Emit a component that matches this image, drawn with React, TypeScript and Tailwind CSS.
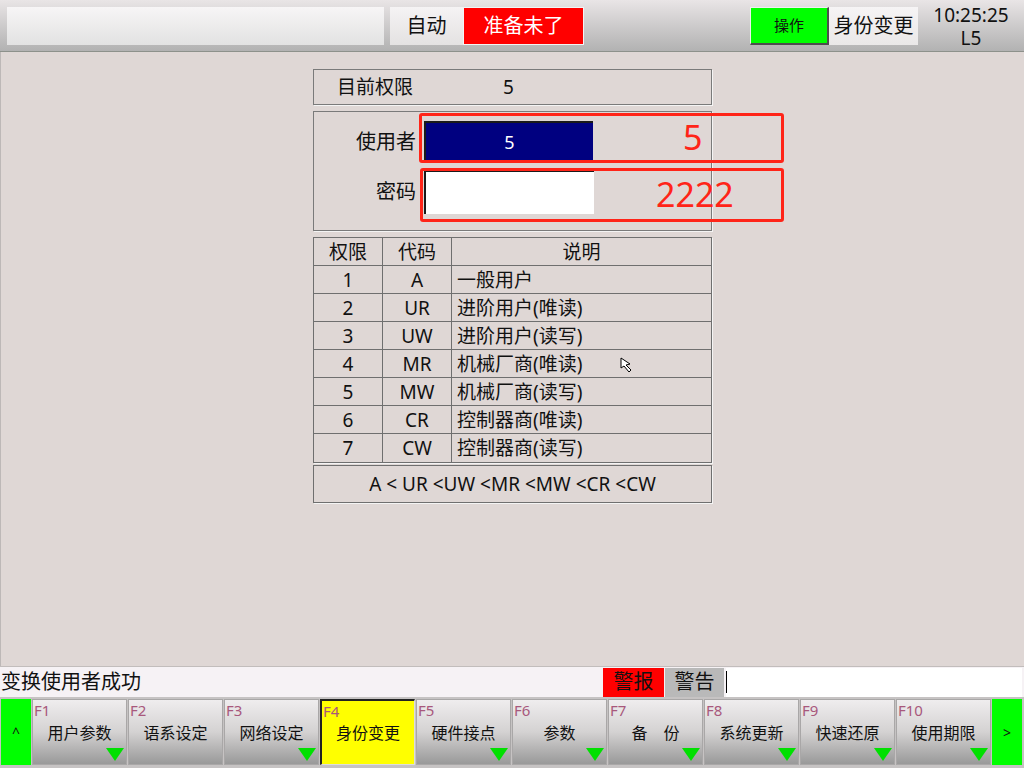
import React from 'react';

const fnKeys = [
  { key: 'F1', label: '用户参数', tri: true },
  { key: 'F2', label: '语系设定', tri: false },
  { key: 'F3', label: '网络设定', tri: true },
  { key: 'F4', label: '身份变更', tri: false, active: true },
  { key: 'F5', label: '硬件接点', tri: true },
  { key: 'F6', label: '参数', tri: true },
  { key: 'F7', label: '备　份', tri: true },
  { key: 'F8', label: '系统更新', tri: true },
  { key: 'F9', label: '快速还原', tri: true },
  { key: 'F10', label: '使用期限', tri: true },
];

const levels = [
  ['1', 'A', '一般用户'],
  ['2', 'UR', '进阶用户(唯读)'],
  ['3', 'UW', '进阶用户(读写)'],
  ['4', 'MR', '机械厂商(唯读)'],
  ['5', 'MW', '机械厂商(读写)'],
  ['6', 'CR', '控制器商(唯读)'],
  ['7', 'CW', '控制器商(读写)'],
];

function FnButton({ k, label, tri, active }: { k: string; label: string; tri: boolean; active?: boolean }) {
  return (
    <div
      className={
        'relative w-[95px] h-full flex items-center justify-center ' +
        (active
          ? 'bg-[#ffff00] border-l-2 border-t-2 border-[#222] border-r border-b border-r-[#ddd] border-b-[#ddd]'
          : 'bg-gradient-to-b from-[#efedee] via-[#d4d2d2] to-[#999999] border border-[#a9a7a7]')
      }
    >
      <span className="absolute left-[1px] top-[3px] text-[15px] leading-none text-[#a8587c]">{k}</span>
      <span className="text-[16px] text-[#111] mt-[1px]">{label}</span>
      {tri && (
        <svg className="absolute right-[2px] bottom-[3px]" width="18" height="13" viewBox="0 0 18 13">
          <polygon points="0,0 18,0 9,13" fill="#00e000" />
        </svg>
      )}
    </div>
  );
}

export default function App() {
  return (
    <div className="w-[1024px] h-[768px] flex flex-col overflow-hidden font-['Noto_Sans','Noto_Sans_CJK_SC',sans-serif] text-[#111] bg-[#dfd7d5]">
      {/* top bar */}
      <div className="h-[52px] shrink-0 flex items-start pt-[7px] bg-gradient-to-b from-[#e9e5e6] to-[#b2b2b2] border-b border-[#8d918b]">
        <div className="ml-[7px] w-[377px] h-[38px] bg-gradient-to-b from-[#f7f5f6] to-[#e2e2e2]" />
        <div className="ml-[6px] w-[73px] h-[38px] flex items-center justify-center bg-gradient-to-b from-[#f5f3f4] to-[#e4e2e2] text-[20px]">自动</div>
        <div className="w-[121px] h-[38px] flex items-center justify-center bg-[#ff0000] border border-[#f4f4f4] text-white text-[20px]">准备未了</div>
        <div className="ml-[166px] w-[79px] h-[38px] flex items-center justify-center bg-[#00ff00] border-r-2 border-b-2 border-[#4d4d4d] border-l border-t border-l-[#f0f0f0] border-t-[#f0f0f0] text-[15px]">操作</div>
        <div className="w-[89px] h-[38px] flex items-center justify-center bg-gradient-to-b from-[#f6f4f5] to-[#eae8e8] text-[20px]">身份变更</div>
        <div className="flex-1 flex flex-col items-center gap-[5px] -mt-[1px] text-[19px] leading-[18px]">
          <span>10:25:25</span>
          <span>L5</span>
        </div>
      </div>

      {/* main */}
      <div className="flex-1 relative border-l border-[#bdb8b7]">
        <div className="w-[399px] mx-auto pt-[17px] flex flex-col gap-[6px] text-[19px]">
          <div className="h-[36px] flex items-center border border-[#7a7a7a] shadow-[1px_1px_0_#f4f4f4]">
            <span className="ml-[23px] w-[166px]">目前权限</span>
            <span>5</span>
          </div>

          <div className="relative h-[120px] border border-[#7a7a7a] shadow-[1px_1px_0_#f4f4f4] pt-[9px] flex flex-col gap-[8px] text-[20px]">
            <div className="flex items-center">
              <span className="w-[102px] text-right">使用者</span>
              <div className="ml-[8px] w-[169px] h-[41px] flex items-center justify-center bg-[#000080] border-t-2 border-l-2 border-[#1a1a1a] text-white text-[18px]">5</div>
            </div>
            <div className="flex items-center">
              <span className="w-[102px] text-right">密码</span>
              <div className="ml-[8px] w-[170px] h-[44px] bg-white border-t-2 border-l-2 border-[#1a1a1a]" />
            </div>
            <div className="absolute left-[105px] top-[1px] w-[365px] h-[50px] border-[3px] border-[#ff2418] rounded-[3px]">
              <span className="absolute left-[261px] top-[-3px] text-[34px] leading-[48px] text-[#ff2418]">5</span>
            </div>
            <div className="absolute left-[106px] top-[56px] w-[364px] h-[54px] border-[3px] border-[#ff2418] rounded-[3px]">
              <span className="absolute left-[233px] top-[-1px] text-[34px] leading-[48px] text-[#ff2418]">2222</span>
            </div>
          </div>

          <div className="flex flex-col">
            <div className="border border-[#6f6f6f] shadow-[1px_1px_0_#f4f4f4]">
              <div className="grid grid-cols-[69px_69px_1fr] h-[28px] border-b border-[#6f6f6f]">
                <div className="flex items-center justify-center border-r border-[#6f6f6f]">权限</div>
                <div className="flex items-center justify-center border-r border-[#6f6f6f]">代码</div>
                <div className="flex items-center justify-center">说明</div>
              </div>
              {levels.map(([n, c, d], i) => (
                <div key={n} className={'grid grid-cols-[69px_69px_1fr] h-[28px] ' + (i < levels.length - 1 ? 'border-b border-[#6f6f6f]' : '')}>
                  <div className="flex items-center justify-center border-r border-[#6f6f6f]">{n}</div>
                  <div className="flex items-center justify-center border-r border-[#6f6f6f]">{c}</div>
                  <div className="flex items-center pl-[5px]">{d}</div>
                </div>
              ))}
            </div>
            <div className="mt-[2px] h-[38px] flex items-center justify-center border border-[#6f6f6f] shadow-[1px_1px_0_#f4f4f4]">
              A &lt; UR &lt;UW &lt;MR &lt;MW &lt;CR &lt;CW
            </div>
          </div>
        </div>

        {/* mouse pointer */}
        <svg className="absolute left-[619px] top-[305px]" width="16" height="18" viewBox="0 0 16 18">
          <path d="M1 1 L1 11 L4 9 L9 15 L11 13 L6 8 L10 7 Z" fill="#fff" stroke="#000" strokeWidth="1" strokeLinejoin="round" />
        </svg>
      </div>

      {/* status line */}
      <div className="h-[31px] shrink-0 flex items-center bg-[#f6f2f5] border-t border-[#c2bdbc]">
        <span className="flex-1 text-[20px] leading-none pl-[1px]">变换使用者成功</span>
        <div className="w-[61px] h-[29px] flex items-center justify-center bg-[#ff0000] text-[20px]">警报</div>
        <div className="ml-[1px] w-[59px] h-[29px] flex items-center justify-center bg-[#b9b9b9] text-[20px]">警告</div>
        <div className="ml-[2px] mr-[2px] w-[296px] h-[29px] bg-white flex items-center">
          <div className="w-[1px] h-[22px] bg-black" />
        </div>
      </div>

      {/* function keys */}
      <div className="h-[71px] shrink-0 flex gap-[1px] px-[1px] pt-[2px] pb-[3px] bg-[#c6c3c3]">
        <div className="w-[30px] h-full flex items-center justify-center bg-[#00ff00] text-[14px]">^</div>
        {fnKeys.map((f) => (
          <FnButton key={f.key} k={f.key} label={f.label} tri={f.tri} active={f.active} />
        ))}
        <div className="w-[30px] h-full flex items-center justify-center bg-[#00ff00] text-[14px]">&gt;</div>
      </div>
    </div>
  );
}
